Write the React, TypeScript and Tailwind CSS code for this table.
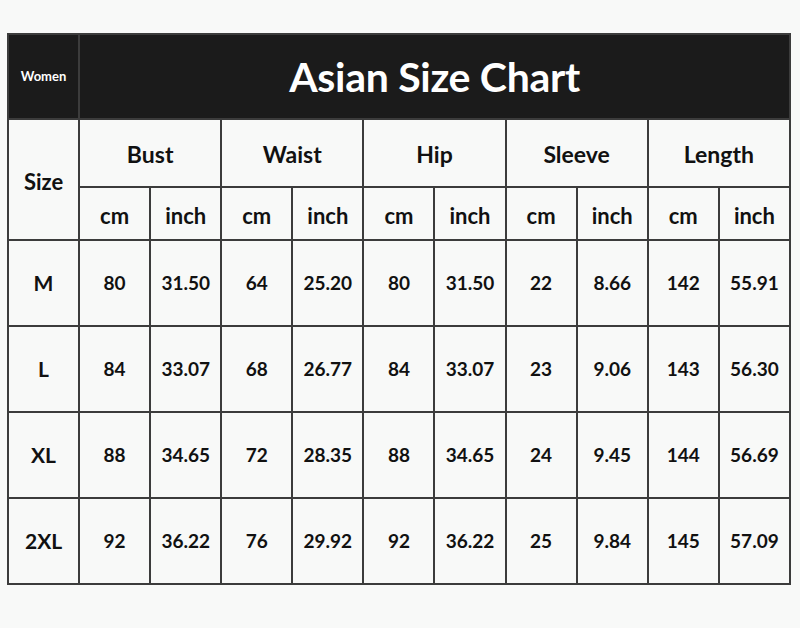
import React from 'react';

const groups = ['Bust', 'Waist', 'Hip', 'Sleeve', 'Length'];

const rows = [
  { size: 'M', values: ['80', '31.50', '64', '25.20', '80', '31.50', '22', '8.66', '142', '55.91'] },
  { size: 'L', values: ['84', '33.07', '68', '26.77', '84', '33.07', '23', '9.06', '143', '56.30'] },
  { size: 'XL', values: ['88', '34.65', '72', '28.35', '88', '34.65', '24', '9.45', '144', '56.69'] },
  { size: '2XL', values: ['92', '36.22', '76', '29.92', '92', '36.22', '25', '9.84', '145', '57.09'] },
];

const cell = 'border-2 border-[#3c3c3c] text-center align-middle p-0';

export default function App() {
  return (
    <div className="w-[800px] h-[628px] bg-[#f8f9f8] pt-[33px] pl-[7px] font-['Lato','Open_Sans',sans-serif] font-bold text-[#111]">
      <table className="table-fixed border-collapse w-[784px]">
        <colgroup>
          {Array.from({ length: 11 }).map((_, i) => (
            <col key={i} className="w-[71px]" />
          ))}
        </colgroup>
        <tbody>
          <tr className="h-[85px] bg-[#1b1b1b] text-white">
            <td className={`${cell} border-[#1b1b1b] border-r-[#3c3c3c] text-[13px]`}>Women</td>
            <td colSpan={10} className={`${cell} border-[#1b1b1b] text-[41px] tracking-[-0.3px]`}>
              Asian Size Chart
            </td>
          </tr>
          <tr className="h-[68px]">
            <td rowSpan={2} className={`${cell} text-[22px] pt-[4px]`}>Size</td>
            {groups.map((g) => (
              <td key={g} colSpan={2} className={`${cell} text-[23px] pt-[2px]`}>
                {g}
              </td>
            ))}
          </tr>
          <tr className="h-[53px]">
            {groups.map((g) => (
              <React.Fragment key={g}>
                <td className={`${cell} text-[22px] pt-[3px]`}>cm</td>
                <td className={`${cell} text-[22px] pt-[3px]`}>inch</td>
              </React.Fragment>
            ))}
          </tr>
          {rows.map((r) => (
            <tr key={r.size} className="h-[86px]">
              <td className={`${cell} text-[21px]`}>{r.size}</td>
              {r.values.map((v, i) => (
                <td key={i} className={`${cell} text-[19px]`}>
                  {v}
                </td>
              ))}
            </tr>
          ))}
        </tbody>
      </table>
    </div>
  );
}
